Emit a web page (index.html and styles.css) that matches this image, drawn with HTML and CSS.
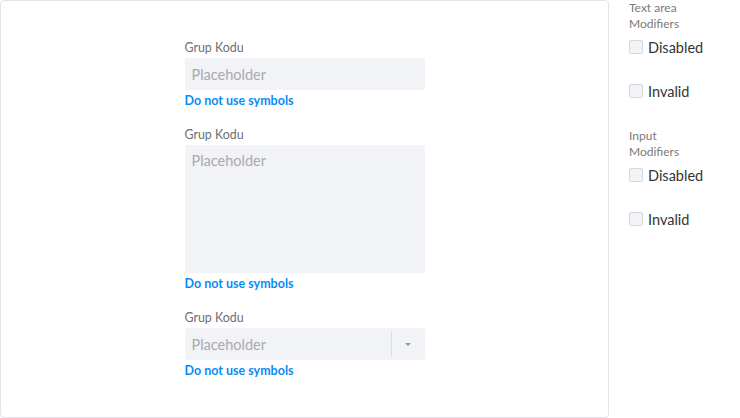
FILE: index.html
```html
<!DOCTYPE html>
<html>
<head>
<meta charset="utf-8">
<link rel="stylesheet" href="styles.css">
</head>
<body>
<div class="page">
  <div class="card">
    <div class="form">
      <div class="field">
        <div class="label">Grup Kodu</div>
        <div class="control input"><span class="ph">Placeholder</span></div>
        <div class="help">Do not use symbols</div>
      </div>
      <div class="field">
        <div class="label">Grup Kodu</div>
        <div class="control textarea"><span class="ph">Placeholder</span></div>
        <div class="help">Do not use symbols</div>
      </div>
      <div class="field">
        <div class="label">Grup Kodu</div>
        <div class="control select">
          <span class="ph">Placeholder</span>
          <span class="sep"></span>
          <span class="arrow"></span>
        </div>
        <div class="help">Do not use symbols</div>
      </div>
    </div>
  </div>
  <div class="side">
    <div class="group">
      <div class="title">Text area<br>Modifiers</div>
      <label class="check"><span class="box"></span>Disabled</label>
      <label class="check"><span class="box"></span>Invalid</label>
    </div>
    <div class="group">
      <div class="title">Input<br>Modifiers</div>
      <label class="check"><span class="box"></span>Disabled</label>
      <label class="check"><span class="box"></span>Invalid</label>
    </div>
  </div>
</div>
</body>
</html>
```
FILE: styles.css
```css
html, body {
  margin: 0;
  padding: 0;
  background: #ffffff;
  font-family: "Lato", "Noto Sans", sans-serif;
}
.page {
  display: flex;
  gap: 20px;
  width: 740px;
  height: 418px;
}
.card {
  box-sizing: border-box;
  width: 609px;
  height: 418px;
  border: 1px solid #e3e3e8;
  border-radius: 4px;
  display: flex;
  justify-content: center;
  padding-top: 38px;
}
.form {
  width: 240px;
  display: flex;
  flex-direction: column;
  gap: 17px;
}
.label {
  font-size: 12.4px;
  line-height: 16px;
  color: #6e6e73;
  padding-top: 1px;
  margin-bottom: 2px;
}
.control {
  box-sizing: border-box;
  background: #f2f3f7;
  border-radius: 2px;
  padding: 0 7px;
  font-size: 14.5px;
  color: #a9a9ae;
}
.input {
  height: 32px;
  display: flex;
  align-items: center;
}
.textarea {
  height: 128px;
  padding-top: 7px;
  line-height: 18px;
}
.select {
  height: 32px;
  display: flex;
  align-items: center;
  padding-right: 0;
}
.select .ph {
  flex: 1;
}
.sep {
  width: 1px;
  height: 26px;
  background: #dddde2;
}
.arrow {
  width: 33px;
  display: flex;
  justify-content: center;
}
.arrow::before {
  content: "";
  border-left: 3.5px solid transparent;
  border-right: 3.5px solid transparent;
  border-top: 3.5px solid #9a9aa0;
}
.help {
  margin-top: 3px;
  font-size: 12.5px;
  line-height: 16px;
  font-weight: 700;
  color: #0a8cf5;
}
.side {
  display: flex;
  flex-direction: column;
  gap: 27px;
}
.group {
  display: flex;
  flex-direction: column;
  gap: 24px;
}
.title {
  font-size: 12px;
  line-height: 16px;
  color: #7a7a80;
  margin-bottom: -19px;
}
.check {
  display: flex;
  align-items: center;
  gap: 5px;
  height: 20px;
  font-size: 14.5px;
  color: #333338;
}
.box {
  box-sizing: border-box;
  width: 14px;
  height: 14px;
  border: 1px solid #d9d9df;
  background: #f2f3f7;
  border-radius: 2px;
}
```
